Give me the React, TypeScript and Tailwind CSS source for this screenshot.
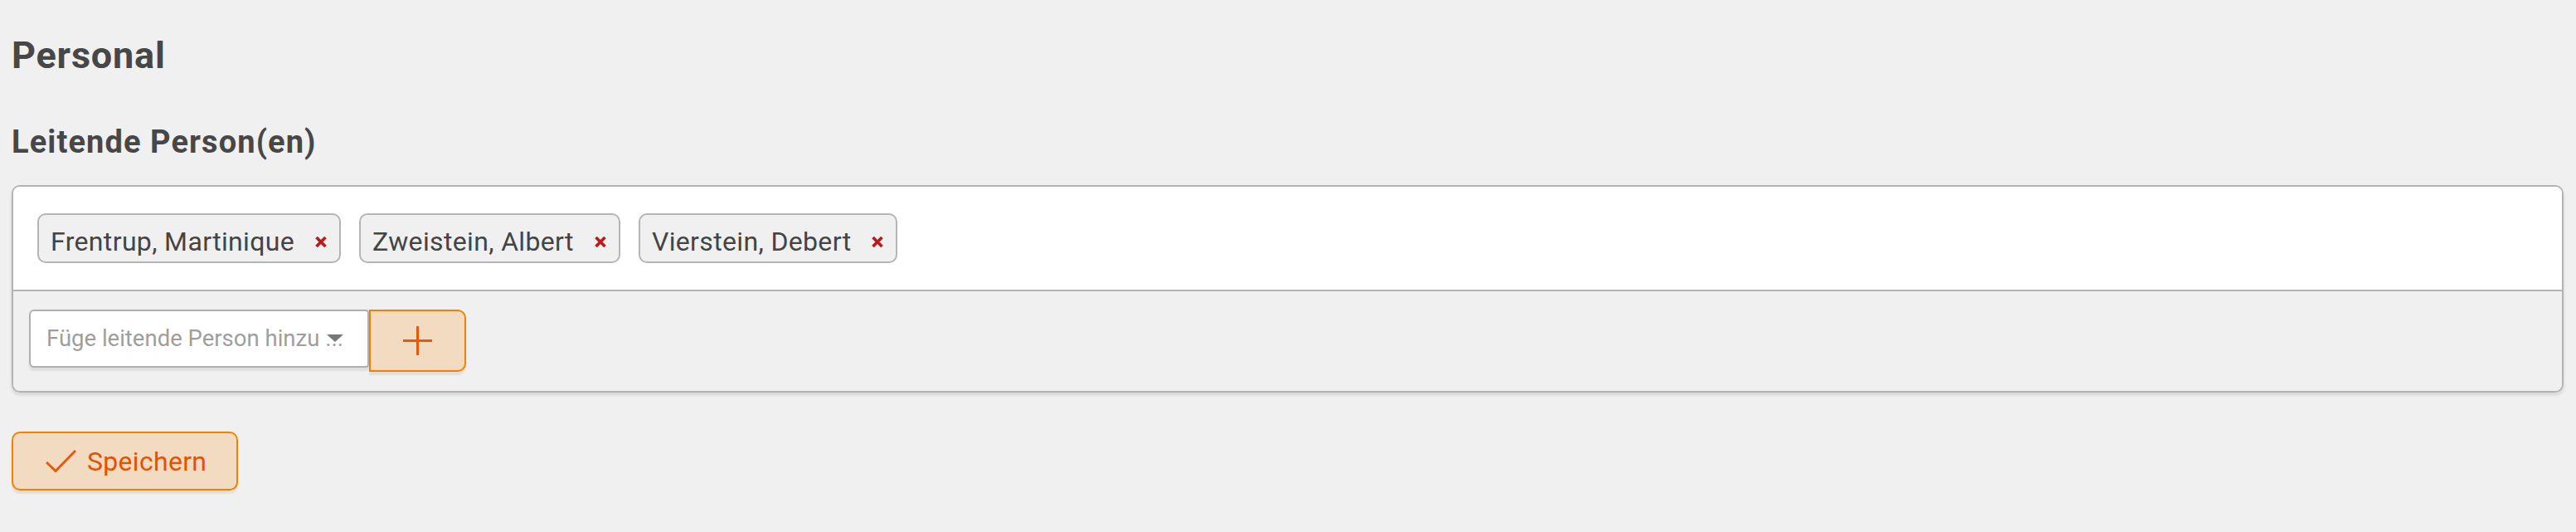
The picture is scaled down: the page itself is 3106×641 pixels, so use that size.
import React from "react";

const people = ["Frentrup, Martinique", "Zweistein, Albert", "Vierstein, Debert"];

function Chip({ name }: { name: string }) {
  return (
    <div className="h-[60px] flex items-center gap-[25px] pt-[8px] pl-[14px] pr-[15px] border-2 border-[#b5b5b5] rounded-[10px] bg-[#f0f0f0] text-[32px] tracking-[0.35px] text-[#444444] whitespace-nowrap">
      <span>{name}</span>
      <svg width="14" height="13" viewBox="0 0 14 13" className="shrink-0">
        <path d="M1.5 1 L12.5 12 M12.5 1 L1.5 12" stroke="#b71c1c" strokeWidth="3.6" strokeLinecap="butt" />
      </svg>
    </div>
  );
}

export default function App() {
  return (
    <div className="min-h-[641px] bg-[#f0f0f0] font-['Roboto',sans-serif] text-[#474747] pl-[14px] pr-[15px] pt-[44px]">
      <h1 className="text-[45px] leading-none font-bold tracking-[0.8px]">Personal</h1>
      <h2 className="mt-[63px] text-[38px] leading-none font-bold tracking-[1.1px]">Leitende Person(en)</h2>

      <div className="mt-[33px] border-2 border-[#b3b3b3] rounded-[10px] shadow-[0_3px_4px_rgba(0,0,0,0.12)] overflow-hidden">
        <div className="bg-white pl-[29px] py-[32px] flex gap-[22px] border-b-2 border-[#b3b3b3]">
          {people.map((p) => (
            <Chip key={p} name={p} />
          ))}
        </div>
        <div className="bg-[#f0f0f0] pl-[19px] pt-[22px] pb-[23px] flex items-start">
          <div className="relative w-[410px] h-[70px] bg-white border-2 border-[#b0b0b0] rounded-l-[6px] rounded-r-[4px] shadow-[0_4px_2px_rgba(0,0,0,0.07)] flex items-center pl-[19px] pr-[20px] overflow-hidden">
            <span className="text-[27.5px] text-[#9e9e9e] whitespace-nowrap">Füge leitende Person hinzu ...</span>
            <svg width="20" height="9" viewBox="0 0 20 9" className="absolute right-[29px] top-[28px]">
              <path d="M0 0 H20 L10 9 Z" fill="#777777" />
            </svg>
          </div>
          <button className="w-[117px] h-[75px] bg-[#f3dbc2] border-2 border-[#f77f00] rounded-r-[10px] shadow-[0_4px_2px_rgba(0,0,0,0.07)] flex items-center justify-center">
            <svg width="35" height="35" viewBox="0 0 35 35">
              <path d="M17.5 0 V35 M0 17.5 H35" stroke="#e8590c" strokeWidth="3" />
            </svg>
          </button>
        </div>
      </div>

      <button className="mt-[47px] w-[273px] h-[71px] bg-[#f3dbc2] border-2 border-[#f77f00] rounded-[10px] shadow-[0_4px_2px_rgba(0,0,0,0.07)] flex items-center pl-[39px] gap-[13px] text-[32px] tracking-[0.3px] text-[#e65100]">
        <svg width="37" height="27" viewBox="0 0 37 27" className="shrink-0">
          <path d="M1 15 L12 25.5 L36 1" stroke="#e8590c" strokeWidth="3" fill="none" />
        </svg>
        <span className="leading-none">Speichern</span>
      </button>
    </div>
  );
}
